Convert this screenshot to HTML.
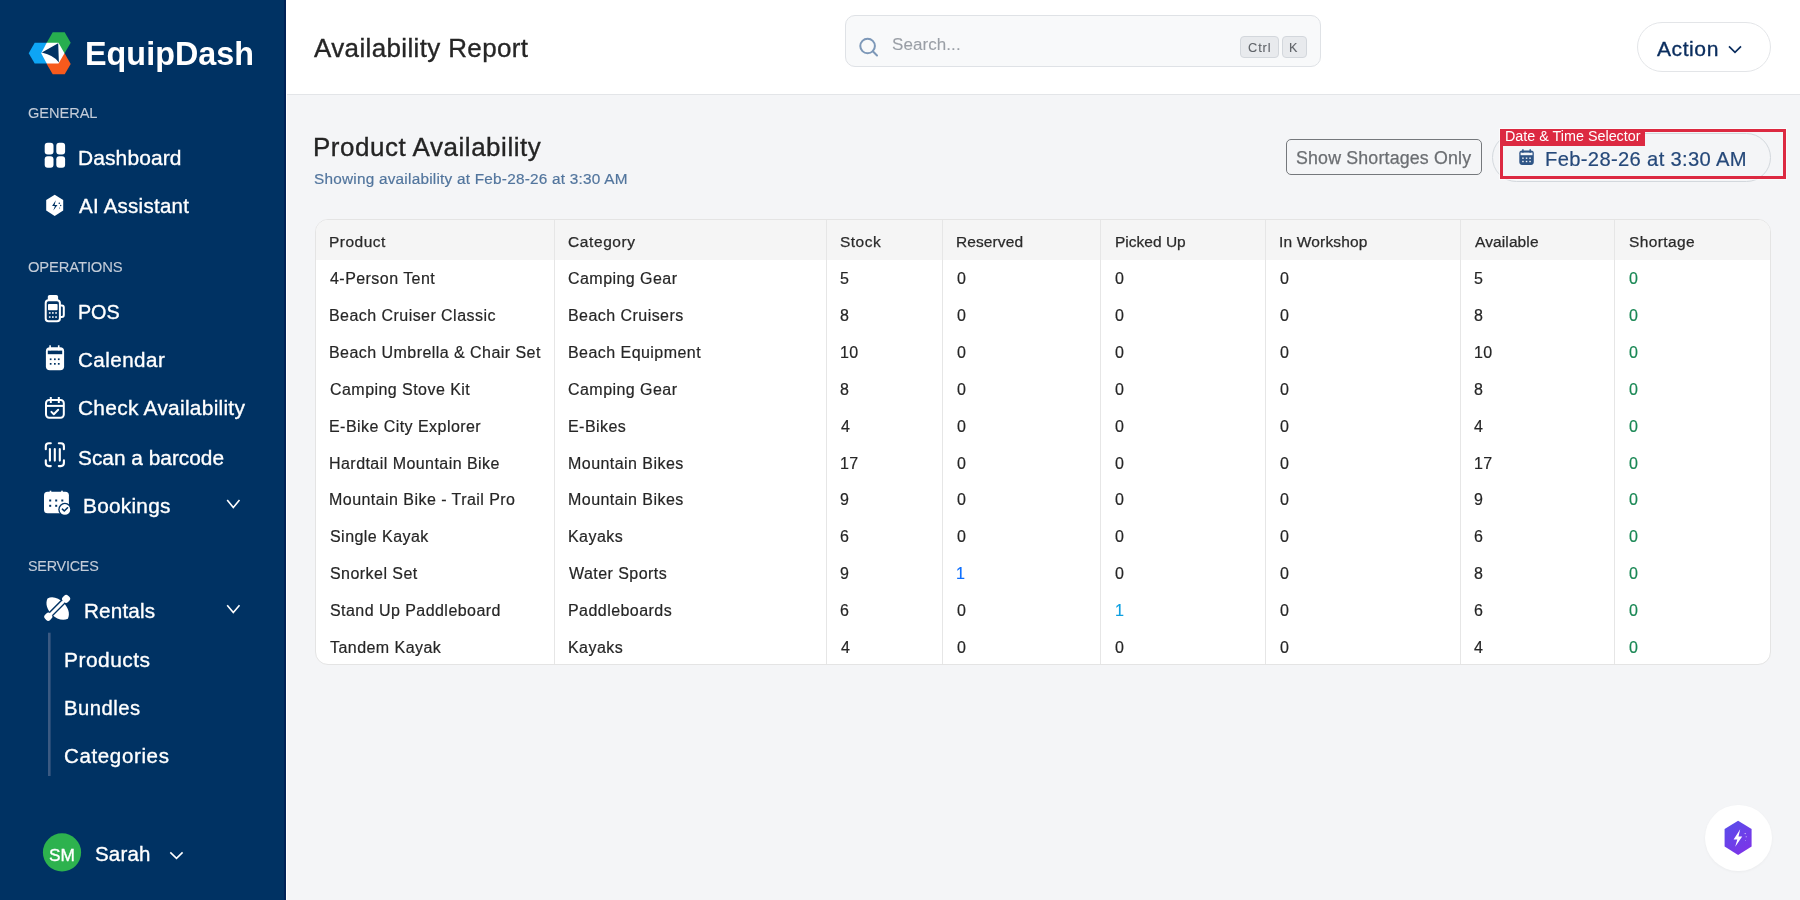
<!DOCTYPE html>
<html><head><meta charset="utf-8"><title>Availability Report</title><style>
*{margin:0;padding:0;box-sizing:border-box}
html,body{width:1800px;height:900px;overflow:hidden;background:#f4f5f7;font-family:"Liberation Sans",sans-serif}
.t{position:absolute;line-height:1;white-space:nowrap;will-change:transform;-webkit-text-stroke:0.35px currentColor}
.ns{-webkit-text-stroke:0}
.abs{position:absolute}
svg{position:absolute;overflow:visible}
</style></head><body>
<div class="abs" style="left:0;top:0;width:286px;height:900px;background:#003263;border-right:2px solid #002256"></div>
<div class="abs" style="left:286px;top:0;width:1px;height:900px;background:#fff"></div>
<svg style="left:0;top:0" width="100" height="100" viewBox="0 0 100 100">
<polygon fill="#0ea5f5" points="34.7,42.8 46.7,42.8 52.7,53.2 46.7,63.6 34.7,63.6 28.7,53.2"/>
<polygon fill="#27ae4f" points="52.7,32.3 64.7,32.3 70.7,42.7 64.7,53.1 52.7,53.1 46.7,42.7"/>
<polygon fill="#f75a1c" points="52.7,53.5 64.7,53.5 70.7,63.9 64.7,74.3 52.7,74.3 46.7,63.9"/>
<polygon fill="#ffffff" points="46.7,42.8 58.5,42.8 64.5,53.2 58.5,63.6 46.7,63.6 41.2,53.2"/>
<path fill="#003263" d="M41.8,52.6 L58.2,43.2 L58.9,62.4 Q54,55.5 41.8,52.6 Z"/>
</svg>
<div class="t" style="left:84.87px;top:38.00px;font-size:32.31px;letter-spacing:0.045px;color:#ffffff;font-weight:700;-webkit-text-stroke:0;">EquipDash</div>

<div class="t" style="left:27.97px;top:106.00px;font-size:14.61px;letter-spacing:-0.056px;color:#c3ccd8;-webkit-text-stroke:0.1px currentColor;">GENERAL</div>

<div class="t" style="left:27.99px;top:260.00px;font-size:14.79px;letter-spacing:-0.131px;color:#c3ccd8;-webkit-text-stroke:0.1px currentColor;">OPERATIONS</div>

<div class="t" style="left:27.84px;top:559.00px;font-size:14.36px;letter-spacing:-0.224px;color:#c3ccd8;-webkit-text-stroke:0.1px currentColor;">SERVICES</div>

<div class="t" style="left:77.88px;top:148.00px;font-size:20.97px;letter-spacing:0.110px;color:#ffffff;">Dashboard</div>

<div class="t" style="left:79.26px;top:196.00px;font-size:20.48px;letter-spacing:0.267px;color:#ffffff;">AI Assistant</div>

<div class="t" style="left:77.68px;top:303.00px;font-size:19.81px;letter-spacing:-0.102px;color:#ffffff;">POS</div>

<div class="t" style="left:78.27px;top:350.00px;font-size:20.58px;letter-spacing:0.463px;color:#ffffff;">Calendar</div>

<div class="t" style="left:78.05px;top:398.00px;font-size:20.93px;letter-spacing:0.264px;color:#ffffff;">Check Availability</div>

<div class="t" style="left:78.14px;top:448.00px;font-size:20.82px;letter-spacing:0.019px;color:#ffffff;">Scan a barcode</div>

<div class="t" style="left:83.29px;top:496.00px;font-size:20.81px;letter-spacing:0.263px;color:#ffffff;">Bookings</div>

<div class="t" style="left:83.61px;top:601.00px;font-size:20.67px;letter-spacing:0.177px;color:#ffffff;">Rentals</div>

<div class="t" style="left:63.58px;top:650.00px;font-size:20.94px;letter-spacing:0.480px;color:#ffffff;">Products</div>

<div class="t" style="left:63.64px;top:698.00px;font-size:20.23px;letter-spacing:0.526px;color:#ffffff;">Bundles</div>

<div class="t" style="left:64.27px;top:746.00px;font-size:20.53px;letter-spacing:0.632px;color:#ffffff;">Categories</div>

<div class="t" style="left:94.86px;top:844.00px;font-size:20.50px;letter-spacing:0.190px;color:#ffffff;">Sarah</div>

<svg style="left:0;top:0" width="286" height="900" viewBox="0 0 286 900">
<g fill="#fff">
<rect x="44.7" y="142.7" width="8.8" height="11.8" rx="3"/>
<rect x="56.3" y="142.7" width="8.8" height="11.8" rx="3"/>
<rect x="44.7" y="156.2" width="8.8" height="11.6" rx="3"/>
<rect x="56.3" y="156.2" width="8.8" height="11.6" rx="3"/>
</g>
<polygon fill="#fff" points="54.7,194.8 63.2,200 63.2,210.6 54.7,216 46.2,210.6 46.2,200"/>
<path fill="#003263" d="M55.8,200.2 L52.1,205.9 L54.9,205.9 L53.3,210.6 L57.5,204.9 L54.6,204.9 Z"/>
<g fill="#003263"><circle cx="59.3" cy="203.2" r="0.8"/><circle cx="60.7" cy="205.5" r="0.7"/><circle cx="59.6" cy="208" r="0.5"/></g>
<!-- POS -->
<rect x="47.8" y="295" width="10.3" height="6" rx="1.8" fill="#fff"/>
<rect x="45.7" y="300.3" width="14.2" height="21" rx="2.8" fill="none" stroke="#fff" stroke-width="2"/>
<path d="M60.2,305.5 h1.6 a2,2 0 0 1 2,2 v7.4 a2,2 0 0 1 -2,2 h-1.6" fill="none" stroke="#fff" stroke-width="2"/>
<rect x="48" y="304" width="9.6" height="6.2" rx="0.8" fill="#fff"/>
<g fill="#fff"><rect x="48.9" y="312.2" width="1.7" height="1.5"/><rect x="52" y="312.2" width="1.7" height="1.5"/><rect x="55.2" y="312.2" width="1.7" height="1.5"/>
<rect x="48.9" y="316.3" width="1.7" height="1.5"/><rect x="52" y="316.3" width="1.7" height="1.5"/><rect x="55.2" y="316.3" width="1.7" height="1.5"/></g>
<!-- Calendar -->
<rect x="45.9" y="347.2" width="18.2" height="23" rx="4" fill="#fff"/>
<rect x="47.8" y="350.6" width="14.4" height="3.6" fill="#003263"/>
<rect x="49.3" y="345.3" width="1.6" height="5" fill="#fff"/><rect x="57.9" y="345.3" width="1.6" height="5" fill="#fff"/>
<g fill="#003263"><rect x="49.8" y="358.4" width="1.7" height="1.7"/><rect x="54" y="358.4" width="1.7" height="1.7"/><rect x="57.9" y="358.4" width="1.7" height="1.7"/>
<rect x="49.8" y="363" width="1.7" height="1.7"/><rect x="54" y="363" width="1.7" height="1.7"/><rect x="57.9" y="363" width="1.7" height="1.7"/></g>
<!-- Check availability -->
<rect x="46" y="400" width="17.8" height="17.8" rx="3.2" fill="none" stroke="#fff" stroke-width="2"/>
<line x1="46" y1="405.9" x2="63.8" y2="405.9" stroke="#fff" stroke-width="2"/>
<line x1="50.8" y1="397" x2="50.8" y2="403" stroke="#fff" stroke-width="2"/>
<line x1="58.8" y1="397" x2="58.8" y2="403" stroke="#fff" stroke-width="2"/>
<path d="M51.4,411.9 L53.8,414.2 L58.2,409.8" fill="none" stroke="#fff" stroke-width="2" stroke-linecap="round" stroke-linejoin="round"/>
<!-- Scan -->
<g fill="none" stroke="#fff" stroke-width="2.1" stroke-linecap="round">
<path d="M45.8,449.2 V446.2 a3,3 0 0 1 3,-3 H50.8"/>
<path d="M58.8,443.2 H60.9 a3,3 0 0 1 3,3 V449.2"/>
<path d="M45.8,460.2 V463.1 a3,3 0 0 0 3,3 H50.8"/>
<path d="M58.8,466.1 H60.9 a3,3 0 0 0 3,-3 V460.2"/>
<line x1="49.9" y1="449" x2="49.9" y2="460.6"/><line x1="54.8" y1="449" x2="54.8" y2="460.6"/><line x1="59.8" y1="449" x2="59.8" y2="460.6"/>
</g>
<!-- Bookings -->
<rect x="44" y="491.7" width="24.9" height="21.5" rx="3.5" fill="#fff"/>
<rect x="49.7" y="490.7" width="1.6" height="2" fill="#fff"/><rect x="61.2" y="490.7" width="1.6" height="2" fill="#fff"/>
<g fill="#003263"><rect x="49.2" y="499.5" width="2" height="2"/><rect x="55.2" y="499.5" width="2" height="2"/><rect x="61.3" y="499.5" width="2" height="2"/>
<rect x="49.2" y="504.8" width="2" height="2"/><rect x="55.2" y="504.8" width="2" height="2"/></g>
<circle cx="64.9" cy="509.4" r="6.6" fill="#003263"/>
<circle cx="64.9" cy="509.4" r="5.3" fill="#fff"/>
<path d="M62.4,509.2 L64.3,511 L67.5,507.8" fill="none" stroke="#003263" stroke-width="1.6" stroke-linecap="round" stroke-linejoin="round"/>
<!-- Rentals -->
<g transform="translate(57.7,608.6) rotate(-45)">
<path fill="#fff" d="M0,-14.4 C5.5,-12.5 8.2,-6.5 8.2,0 C8.2,6.5 5.5,12.5 0,14.4 C-5.5,12.5 -8.2,6.5 -8.2,0 C-8.2,-6.5 -5.5,-12.5 0,-14.4 Z"/>
</g>
<g transform="translate(57.2,607.8) rotate(45)">
<rect x="-2.9" y="-8.5" width="1.6" height="17" fill="#003263"/>
<rect x="1.3" y="-8.5" width="1.6" height="17" fill="#003263"/>
<rect x="-1.3" y="-12" width="2.6" height="24" fill="#fff"/>
<rect x="-3.6" y="-16.3" width="7.2" height="7.4" rx="2.8" fill="#fff"/>
<rect x="-3.6" y="8.9" width="7.2" height="7.4" rx="2.8" fill="#fff"/>
</g>
<!-- chevrons -->
<path d="M227.2,500 L233.3,507.4 L239.5,500" fill="none" stroke="#fff" stroke-width="1.6"/>
<path d="M227.2,605.2 L233.3,612.6 L239.5,605.2" fill="none" stroke="#fff" stroke-width="1.6"/>
<path d="M170.3,852.4 L176.5,858.4 L182.6,852.4" fill="none" stroke="#fff" stroke-width="1.6"/>
<rect x="48" y="632.7" width="2.6" height="143.3" fill="#3b5a82"/>
<circle cx="62" cy="852.4" r="19.1" fill="#2db24e"/>
</svg>
<div class="t" style="left:48.61px;top:847.00px;font-size:17.24px;letter-spacing:0.117px;color:#ffffff;">SM</div>

<div class="abs" style="left:287px;top:0;width:1513px;height:95px;background:#fff;border-bottom:1px solid #e3e5e8"></div>
<div class="t" style="left:314.35px;top:35.00px;font-size:25.98px;letter-spacing:0.371px;color:#262626;">Availability Report</div>

<div class="abs" style="left:845px;top:15px;width:476px;height:52px;background:#f8f9fa;border:1px solid #dfe2e6;border-radius:10px"></div>
<svg style="left:0;top:0" width="1800" height="100" viewBox="0 0 1800 100">
<circle cx="867.6" cy="46" r="7.3" fill="none" stroke="#7d98b8" stroke-width="2"/>
<line x1="872.8" y1="51.3" x2="877" y2="55.5" stroke="#7d98b8" stroke-width="2" stroke-linecap="round"/>
</svg>
<div class="t" style="left:891.92px;top:36.00px;font-size:17.01px;letter-spacing:0.072px;color:#9a9fa6;-webkit-text-stroke:0.1px currentColor;">Search...</div>

<div class="abs" style="left:1240px;top:36px;width:39px;height:22px;background:#e8eaed;border:1px solid #d3d7dc;border-bottom-width:1.6px;border-radius:4px"></div>
<div class="abs" style="left:1281.5px;top:36px;width:25px;height:22px;background:#e8eaed;border:1px solid #d3d7dc;border-bottom-width:1.6px;border-radius:4px"></div>
<div class="t" style="left:1248.26px;top:42.00px;font-size:12.82px;letter-spacing:0.878px;color:#5f6368;-webkit-text-stroke:0.1px currentColor;">Ctrl</div>

<div class="t" style="left:1289.47px;top:42.00px;font-size:12.58px;letter-spacing:0.000px;color:#5f6368;-webkit-text-stroke:0.1px currentColor;">K</div>

<div class="abs" style="left:1637px;top:22px;width:134px;height:50px;background:#fff;border:1px solid #e3e5e8;border-radius:25px"></div>
<svg style="left:0;top:0" width="1800" height="100" viewBox="0 0 1800 100"><path d="M1729,46.3 L1735,52.3 L1741,46.3" fill="none" stroke="#0a2d5e" stroke-width="1.7"/></svg>
<div class="t" style="left:1656.96px;top:38.00px;font-size:21.08px;letter-spacing:0.556px;color:#0a2d5e;">Action</div>

<div class="t" style="left:313.27px;top:135.00px;font-size:25.96px;letter-spacing:0.548px;color:#242424;">Product Availability</div>

<div class="t" style="left:313.69px;top:171.00px;font-size:15.34px;letter-spacing:0.236px;color:#52759d;-webkit-text-stroke:0.2px currentColor;">Showing availability at Feb-28-26 at 3:30 AM</div>

<div class="abs" style="left:1286px;top:138.7px;width:196px;height:36.7px;border:1.9px solid #75787c;border-radius:5px"></div>
<div class="t" style="left:1296.18px;top:150.00px;font-size:17.78px;letter-spacing:0.179px;color:#6b6e72;-webkit-text-stroke:0.25px currentColor;">Show Shortages Only</div>

<div class="abs" style="left:1492px;top:132.5px;width:279px;height:49px;border:1px solid #d3d8dd;border-radius:25px"></div>
<svg style="left:0;top:0" width="1800" height="200" viewBox="0 0 1800 200">
<rect x="1519.3" y="150.5" width="14.5" height="14.4" rx="2.8" fill="#2f5586"/>
<rect x="1520.6" y="152.6" width="11.9" height="2.6" fill="#f4f5f7"/>
<rect x="1522.2" y="149.2" width="1.4" height="3.5" fill="#2f5586"/><rect x="1529.5" y="149.2" width="1.4" height="3.5" fill="#2f5586"/>
<g fill="#f4f5f7"><rect x="1522.2" y="157.5" width="1.5" height="1.4"/><rect x="1525.8" y="157.5" width="1.5" height="1.4"/><rect x="1529.3" y="157.5" width="1.5" height="1.4"/>
<rect x="1522.2" y="160.8" width="1.5" height="1.4"/><rect x="1525.8" y="160.8" width="1.5" height="1.4"/><rect x="1529.3" y="160.8" width="1.5" height="1.4"/></g>
</svg>
<div class="t" style="left:1545.15px;top:149.00px;font-size:20.17px;letter-spacing:0.349px;color:#26497a;-webkit-text-stroke:0.2px currentColor;">Feb-28-26 at 3:30 AM</div>

<div class="abs" style="left:1500px;top:128.5px;width:286px;height:50.3px;border:3px solid #dc2941;box-shadow:0 0 0 1px rgba(255,255,255,0.6)"></div>
<div class="abs" style="left:1500px;top:128.5px;width:145px;height:17.5px;background:#dc2941"></div>
<div class="t ns" style="left:1505px;top:129px;font-size:14.35px;color:#fff">Date &amp; Time Selector</div>
<div class="abs" style="left:315px;top:219.2px;width:1455.5px;height:446.00000000000006px;background:#fff;border:1px solid #e4e4e4;border-radius:13px;overflow:hidden"><div class="abs" style="left:0;top:0;right:0;height:39.4px;background:#f5f5f5"></div></div>
<div class="abs" style="left:553.7px;top:220.2px;width:1px;height:444.00000000000006px;background:#e6e6e6"></div>
<div class="abs" style="left:825.9px;top:220.2px;width:1px;height:444.00000000000006px;background:#e6e6e6"></div>
<div class="abs" style="left:941.6px;top:220.2px;width:1px;height:444.00000000000006px;background:#e6e6e6"></div>
<div class="abs" style="left:1099.7px;top:220.2px;width:1px;height:444.00000000000006px;background:#e6e6e6"></div>
<div class="abs" style="left:1264.6px;top:220.2px;width:1px;height:444.00000000000006px;background:#e6e6e6"></div>
<div class="abs" style="left:1459.6px;top:220.2px;width:1px;height:444.00000000000006px;background:#e6e6e6"></div>
<div class="abs" style="left:1613.6px;top:220.2px;width:1px;height:444.00000000000006px;background:#e6e6e6"></div>
<div class="t" style="left:329.23px;top:234.00px;font-size:15.50px;letter-spacing:0.497px;color:#2a2a2a;-webkit-text-stroke:0.25px currentColor;">Product</div>

<div class="t" style="left:568.33px;top:234.00px;font-size:15.50px;letter-spacing:0.601px;color:#2a2a2a;-webkit-text-stroke:0.25px currentColor;">Category</div>

<div class="t" style="left:840.39px;top:234.00px;font-size:15.50px;letter-spacing:0.483px;color:#2a2a2a;-webkit-text-stroke:0.25px currentColor;">Stock</div>

<div class="t" style="left:956.33px;top:234.00px;font-size:15.50px;letter-spacing:0.103px;color:#2a2a2a;-webkit-text-stroke:0.25px currentColor;">Reserved</div>

<div class="t" style="left:1114.53px;top:234.00px;font-size:15.50px;letter-spacing:0.009px;color:#2a2a2a;-webkit-text-stroke:0.25px currentColor;">Picked Up</div>

<div class="t" style="left:1279.17px;top:234.00px;font-size:15.50px;letter-spacing:0.174px;color:#2a2a2a;-webkit-text-stroke:0.25px currentColor;">In Workshop</div>

<div class="t" style="left:1474.77px;top:234.00px;font-size:15.50px;letter-spacing:0.112px;color:#2a2a2a;-webkit-text-stroke:0.25px currentColor;">Available</div>

<div class="t" style="left:1628.59px;top:234.00px;font-size:15.50px;letter-spacing:0.385px;color:#2a2a2a;-webkit-text-stroke:0.25px currentColor;">Shortage</div>

<div class="t" style="left:330.15px;top:271px;font-size:16.0px;letter-spacing:0.45px;color:#262626;-webkit-text-stroke:0.2px currentColor">4-Person Tent</div>
<div class="t" style="left:568.30px;top:271px;font-size:16.0px;letter-spacing:0.45px;color:#262626;-webkit-text-stroke:0.2px currentColor">Camping Gear</div>
<div class="t" style="left:840.46px;top:271px;font-size:16.0px;letter-spacing:0.45px;color:#262626;-webkit-text-stroke:0.2px currentColor">5</div>
<div class="t" style="left:956.99px;top:271px;font-size:16.0px;letter-spacing:0.45px;color:#262626;-webkit-text-stroke:0.2px currentColor">0</div>
<div class="t" style="left:1115.19px;top:271px;font-size:16.0px;letter-spacing:0.45px;color:#262626;-webkit-text-stroke:0.2px currentColor">0</div>
<div class="t" style="left:1279.99px;top:271px;font-size:16.0px;letter-spacing:0.45px;color:#262626;-webkit-text-stroke:0.2px currentColor">0</div>
<div class="t" style="left:1474.16px;top:271px;font-size:16.0px;letter-spacing:0.45px;color:#262626;-webkit-text-stroke:0.2px currentColor">5</div>
<div class="t" style="left:1628.69px;top:271px;font-size:16.0px;letter-spacing:0.45px;color:#198754;-webkit-text-stroke:0.2px currentColor">0</div>
<div class="t" style="left:329.19px;top:308px;font-size:16.0px;letter-spacing:0.45px;color:#262626;-webkit-text-stroke:0.2px currentColor">Beach Cruiser Classic</div>
<div class="t" style="left:567.79px;top:308px;font-size:16.0px;letter-spacing:0.45px;color:#262626;-webkit-text-stroke:0.2px currentColor">Beach Cruisers</div>
<div class="t" style="left:840.40px;top:308px;font-size:16.0px;letter-spacing:0.45px;color:#262626;-webkit-text-stroke:0.2px currentColor">8</div>
<div class="t" style="left:956.99px;top:308px;font-size:16.0px;letter-spacing:0.45px;color:#262626;-webkit-text-stroke:0.2px currentColor">0</div>
<div class="t" style="left:1115.19px;top:308px;font-size:16.0px;letter-spacing:0.45px;color:#262626;-webkit-text-stroke:0.2px currentColor">0</div>
<div class="t" style="left:1279.99px;top:308px;font-size:16.0px;letter-spacing:0.45px;color:#262626;-webkit-text-stroke:0.2px currentColor">0</div>
<div class="t" style="left:1474.10px;top:308px;font-size:16.0px;letter-spacing:0.45px;color:#262626;-webkit-text-stroke:0.2px currentColor">8</div>
<div class="t" style="left:1628.69px;top:308px;font-size:16.0px;letter-spacing:0.45px;color:#198754;-webkit-text-stroke:0.2px currentColor">0</div>
<div class="t" style="left:329.19px;top:345px;font-size:16.0px;letter-spacing:0.45px;color:#262626;-webkit-text-stroke:0.2px currentColor">Beach Umbrella &amp; Chair Set</div>
<div class="t" style="left:567.79px;top:345px;font-size:16.0px;letter-spacing:0.45px;color:#262626;-webkit-text-stroke:0.2px currentColor">Beach Equipment</div>
<div class="t" style="left:839.88px;top:345px;font-size:16.0px;letter-spacing:0.45px;color:#262626;-webkit-text-stroke:0.2px currentColor">10</div>
<div class="t" style="left:956.99px;top:345px;font-size:16.0px;letter-spacing:0.45px;color:#262626;-webkit-text-stroke:0.2px currentColor">0</div>
<div class="t" style="left:1115.19px;top:345px;font-size:16.0px;letter-spacing:0.45px;color:#262626;-webkit-text-stroke:0.2px currentColor">0</div>
<div class="t" style="left:1279.99px;top:345px;font-size:16.0px;letter-spacing:0.45px;color:#262626;-webkit-text-stroke:0.2px currentColor">0</div>
<div class="t" style="left:1473.58px;top:345px;font-size:16.0px;letter-spacing:0.45px;color:#262626;-webkit-text-stroke:0.2px currentColor">10</div>
<div class="t" style="left:1628.69px;top:345px;font-size:16.0px;letter-spacing:0.45px;color:#198754;-webkit-text-stroke:0.2px currentColor">0</div>
<div class="t" style="left:329.70px;top:382px;font-size:16.0px;letter-spacing:0.45px;color:#262626;-webkit-text-stroke:0.2px currentColor">Camping Stove Kit</div>
<div class="t" style="left:568.30px;top:382px;font-size:16.0px;letter-spacing:0.45px;color:#262626;-webkit-text-stroke:0.2px currentColor">Camping Gear</div>
<div class="t" style="left:840.40px;top:382px;font-size:16.0px;letter-spacing:0.45px;color:#262626;-webkit-text-stroke:0.2px currentColor">8</div>
<div class="t" style="left:956.99px;top:382px;font-size:16.0px;letter-spacing:0.45px;color:#262626;-webkit-text-stroke:0.2px currentColor">0</div>
<div class="t" style="left:1115.19px;top:382px;font-size:16.0px;letter-spacing:0.45px;color:#262626;-webkit-text-stroke:0.2px currentColor">0</div>
<div class="t" style="left:1279.99px;top:382px;font-size:16.0px;letter-spacing:0.45px;color:#262626;-webkit-text-stroke:0.2px currentColor">0</div>
<div class="t" style="left:1474.10px;top:382px;font-size:16.0px;letter-spacing:0.45px;color:#262626;-webkit-text-stroke:0.2px currentColor">8</div>
<div class="t" style="left:1628.69px;top:382px;font-size:16.0px;letter-spacing:0.45px;color:#198754;-webkit-text-stroke:0.2px currentColor">0</div>
<div class="t" style="left:329.19px;top:419px;font-size:16.0px;letter-spacing:0.45px;color:#262626;-webkit-text-stroke:0.2px currentColor">E-Bike City Explorer</div>
<div class="t" style="left:567.79px;top:419px;font-size:16.0px;letter-spacing:0.45px;color:#262626;-webkit-text-stroke:0.2px currentColor">E-Bikes</div>
<div class="t" style="left:840.75px;top:419px;font-size:16.0px;letter-spacing:0.45px;color:#262626;-webkit-text-stroke:0.2px currentColor">4</div>
<div class="t" style="left:956.99px;top:419px;font-size:16.0px;letter-spacing:0.45px;color:#262626;-webkit-text-stroke:0.2px currentColor">0</div>
<div class="t" style="left:1115.19px;top:419px;font-size:16.0px;letter-spacing:0.45px;color:#262626;-webkit-text-stroke:0.2px currentColor">0</div>
<div class="t" style="left:1279.99px;top:419px;font-size:16.0px;letter-spacing:0.45px;color:#262626;-webkit-text-stroke:0.2px currentColor">0</div>
<div class="t" style="left:1474.45px;top:419px;font-size:16.0px;letter-spacing:0.45px;color:#262626;-webkit-text-stroke:0.2px currentColor">4</div>
<div class="t" style="left:1628.69px;top:419px;font-size:16.0px;letter-spacing:0.45px;color:#198754;-webkit-text-stroke:0.2px currentColor">0</div>
<div class="t" style="left:329.19px;top:456px;font-size:16.0px;letter-spacing:0.45px;color:#262626;-webkit-text-stroke:0.2px currentColor">Hardtail Mountain Bike</div>
<div class="t" style="left:567.79px;top:456px;font-size:16.0px;letter-spacing:0.45px;color:#262626;-webkit-text-stroke:0.2px currentColor">Mountain Bikes</div>
<div class="t" style="left:839.88px;top:456px;font-size:16.0px;letter-spacing:0.45px;color:#262626;-webkit-text-stroke:0.2px currentColor">17</div>
<div class="t" style="left:956.99px;top:456px;font-size:16.0px;letter-spacing:0.45px;color:#262626;-webkit-text-stroke:0.2px currentColor">0</div>
<div class="t" style="left:1115.19px;top:456px;font-size:16.0px;letter-spacing:0.45px;color:#262626;-webkit-text-stroke:0.2px currentColor">0</div>
<div class="t" style="left:1279.99px;top:456px;font-size:16.0px;letter-spacing:0.45px;color:#262626;-webkit-text-stroke:0.2px currentColor">0</div>
<div class="t" style="left:1473.58px;top:456px;font-size:16.0px;letter-spacing:0.45px;color:#262626;-webkit-text-stroke:0.2px currentColor">17</div>
<div class="t" style="left:1628.69px;top:456px;font-size:16.0px;letter-spacing:0.45px;color:#198754;-webkit-text-stroke:0.2px currentColor">0</div>
<div class="t" style="left:329.19px;top:492px;font-size:16.0px;letter-spacing:0.45px;color:#262626;-webkit-text-stroke:0.2px currentColor">Mountain Bike - Trail Pro</div>
<div class="t" style="left:567.79px;top:492px;font-size:16.0px;letter-spacing:0.45px;color:#262626;-webkit-text-stroke:0.2px currentColor">Mountain Bikes</div>
<div class="t" style="left:840.36px;top:492px;font-size:16.0px;letter-spacing:0.45px;color:#262626;-webkit-text-stroke:0.2px currentColor">9</div>
<div class="t" style="left:956.99px;top:492px;font-size:16.0px;letter-spacing:0.45px;color:#262626;-webkit-text-stroke:0.2px currentColor">0</div>
<div class="t" style="left:1115.19px;top:492px;font-size:16.0px;letter-spacing:0.45px;color:#262626;-webkit-text-stroke:0.2px currentColor">0</div>
<div class="t" style="left:1279.99px;top:492px;font-size:16.0px;letter-spacing:0.45px;color:#262626;-webkit-text-stroke:0.2px currentColor">0</div>
<div class="t" style="left:1474.06px;top:492px;font-size:16.0px;letter-spacing:0.45px;color:#262626;-webkit-text-stroke:0.2px currentColor">9</div>
<div class="t" style="left:1628.69px;top:492px;font-size:16.0px;letter-spacing:0.45px;color:#198754;-webkit-text-stroke:0.2px currentColor">0</div>
<div class="t" style="left:329.76px;top:529px;font-size:16.0px;letter-spacing:0.45px;color:#262626;-webkit-text-stroke:0.2px currentColor">Single Kayak</div>
<div class="t" style="left:567.79px;top:529px;font-size:16.0px;letter-spacing:0.45px;color:#262626;-webkit-text-stroke:0.2px currentColor">Kayaks</div>
<div class="t" style="left:840.30px;top:529px;font-size:16.0px;letter-spacing:0.45px;color:#262626;-webkit-text-stroke:0.2px currentColor">6</div>
<div class="t" style="left:956.99px;top:529px;font-size:16.0px;letter-spacing:0.45px;color:#262626;-webkit-text-stroke:0.2px currentColor">0</div>
<div class="t" style="left:1115.19px;top:529px;font-size:16.0px;letter-spacing:0.45px;color:#262626;-webkit-text-stroke:0.2px currentColor">0</div>
<div class="t" style="left:1279.99px;top:529px;font-size:16.0px;letter-spacing:0.45px;color:#262626;-webkit-text-stroke:0.2px currentColor">0</div>
<div class="t" style="left:1474.00px;top:529px;font-size:16.0px;letter-spacing:0.45px;color:#262626;-webkit-text-stroke:0.2px currentColor">6</div>
<div class="t" style="left:1628.69px;top:529px;font-size:16.0px;letter-spacing:0.45px;color:#198754;-webkit-text-stroke:0.2px currentColor">0</div>
<div class="t" style="left:329.76px;top:566px;font-size:16.0px;letter-spacing:0.45px;color:#262626;-webkit-text-stroke:0.2px currentColor">Snorkel Set</div>
<div class="t" style="left:569.04px;top:566px;font-size:16.0px;letter-spacing:0.45px;color:#262626;-webkit-text-stroke:0.2px currentColor">Water Sports</div>
<div class="t" style="left:840.36px;top:566px;font-size:16.0px;letter-spacing:0.45px;color:#262626;-webkit-text-stroke:0.2px currentColor">9</div>
<div class="t" style="left:956.38px;top:566px;font-size:16.0px;letter-spacing:0.45px;color:#0d6efd;-webkit-text-stroke:0.2px currentColor">1</div>
<div class="t" style="left:1115.19px;top:566px;font-size:16.0px;letter-spacing:0.45px;color:#262626;-webkit-text-stroke:0.2px currentColor">0</div>
<div class="t" style="left:1279.99px;top:566px;font-size:16.0px;letter-spacing:0.45px;color:#262626;-webkit-text-stroke:0.2px currentColor">0</div>
<div class="t" style="left:1474.10px;top:566px;font-size:16.0px;letter-spacing:0.45px;color:#262626;-webkit-text-stroke:0.2px currentColor">8</div>
<div class="t" style="left:1628.69px;top:566px;font-size:16.0px;letter-spacing:0.45px;color:#198754;-webkit-text-stroke:0.2px currentColor">0</div>
<div class="t" style="left:329.76px;top:603px;font-size:16.0px;letter-spacing:0.45px;color:#262626;-webkit-text-stroke:0.2px currentColor">Stand Up Paddleboard</div>
<div class="t" style="left:567.79px;top:603px;font-size:16.0px;letter-spacing:0.45px;color:#262626;-webkit-text-stroke:0.2px currentColor">Paddleboards</div>
<div class="t" style="left:840.30px;top:603px;font-size:16.0px;letter-spacing:0.45px;color:#262626;-webkit-text-stroke:0.2px currentColor">6</div>
<div class="t" style="left:956.99px;top:603px;font-size:16.0px;letter-spacing:0.45px;color:#262626;-webkit-text-stroke:0.2px currentColor">0</div>
<div class="t" style="left:1114.58px;top:603px;font-size:16.0px;letter-spacing:0.45px;color:#0d9fe0;-webkit-text-stroke:0.2px currentColor">1</div>
<div class="t" style="left:1279.99px;top:603px;font-size:16.0px;letter-spacing:0.45px;color:#262626;-webkit-text-stroke:0.2px currentColor">0</div>
<div class="t" style="left:1474.00px;top:603px;font-size:16.0px;letter-spacing:0.45px;color:#262626;-webkit-text-stroke:0.2px currentColor">6</div>
<div class="t" style="left:1628.69px;top:603px;font-size:16.0px;letter-spacing:0.45px;color:#198754;-webkit-text-stroke:0.2px currentColor">0</div>
<div class="t" style="left:330.15px;top:640px;font-size:16.0px;letter-spacing:0.45px;color:#262626;-webkit-text-stroke:0.2px currentColor">Tandem Kayak</div>
<div class="t" style="left:567.79px;top:640px;font-size:16.0px;letter-spacing:0.45px;color:#262626;-webkit-text-stroke:0.2px currentColor">Kayaks</div>
<div class="t" style="left:840.75px;top:640px;font-size:16.0px;letter-spacing:0.45px;color:#262626;-webkit-text-stroke:0.2px currentColor">4</div>
<div class="t" style="left:956.99px;top:640px;font-size:16.0px;letter-spacing:0.45px;color:#262626;-webkit-text-stroke:0.2px currentColor">0</div>
<div class="t" style="left:1115.19px;top:640px;font-size:16.0px;letter-spacing:0.45px;color:#262626;-webkit-text-stroke:0.2px currentColor">0</div>
<div class="t" style="left:1279.99px;top:640px;font-size:16.0px;letter-spacing:0.45px;color:#262626;-webkit-text-stroke:0.2px currentColor">0</div>
<div class="t" style="left:1474.45px;top:640px;font-size:16.0px;letter-spacing:0.45px;color:#262626;-webkit-text-stroke:0.2px currentColor">4</div>
<div class="t" style="left:1628.69px;top:640px;font-size:16.0px;letter-spacing:0.45px;color:#198754;-webkit-text-stroke:0.2px currentColor">0</div>
<div class="abs" style="left:1705px;top:804.5px;width:66.5px;height:66.5px;border-radius:50%;background:#fff;box-shadow:0 1px 3px rgba(0,0,0,0.04)"></div>
<svg style="left:0;top:0" width="1800" height="900" viewBox="0 0 1800 900">
<defs><linearGradient id="fg" x1="0" y1="0" x2="0.6" y2="1"><stop offset="0" stop-color="#5650ea"/><stop offset="1" stop-color="#7c34e8"/></linearGradient></defs>
<polygon fill="url(#fg)" points="1738.1,820.7 1751.6,829 1751.6,846.6 1738.1,855 1724.6,846.6 1724.6,829"/>
<path fill="#fff" d="M1740.2,829.2 L1733.6,839.6 L1737.3,839.6 L1735.2,846.8 L1742.2,836.4 L1738.5,836.4 Z"/>
<g fill="#fff" opacity="0.75"><circle cx="1745.2" cy="833.6" r="0.7"/><circle cx="1746.2" cy="836.8" r="0.55"/><circle cx="1745.6" cy="840.4" r="0.45"/></g>
</svg>
</body></html>
